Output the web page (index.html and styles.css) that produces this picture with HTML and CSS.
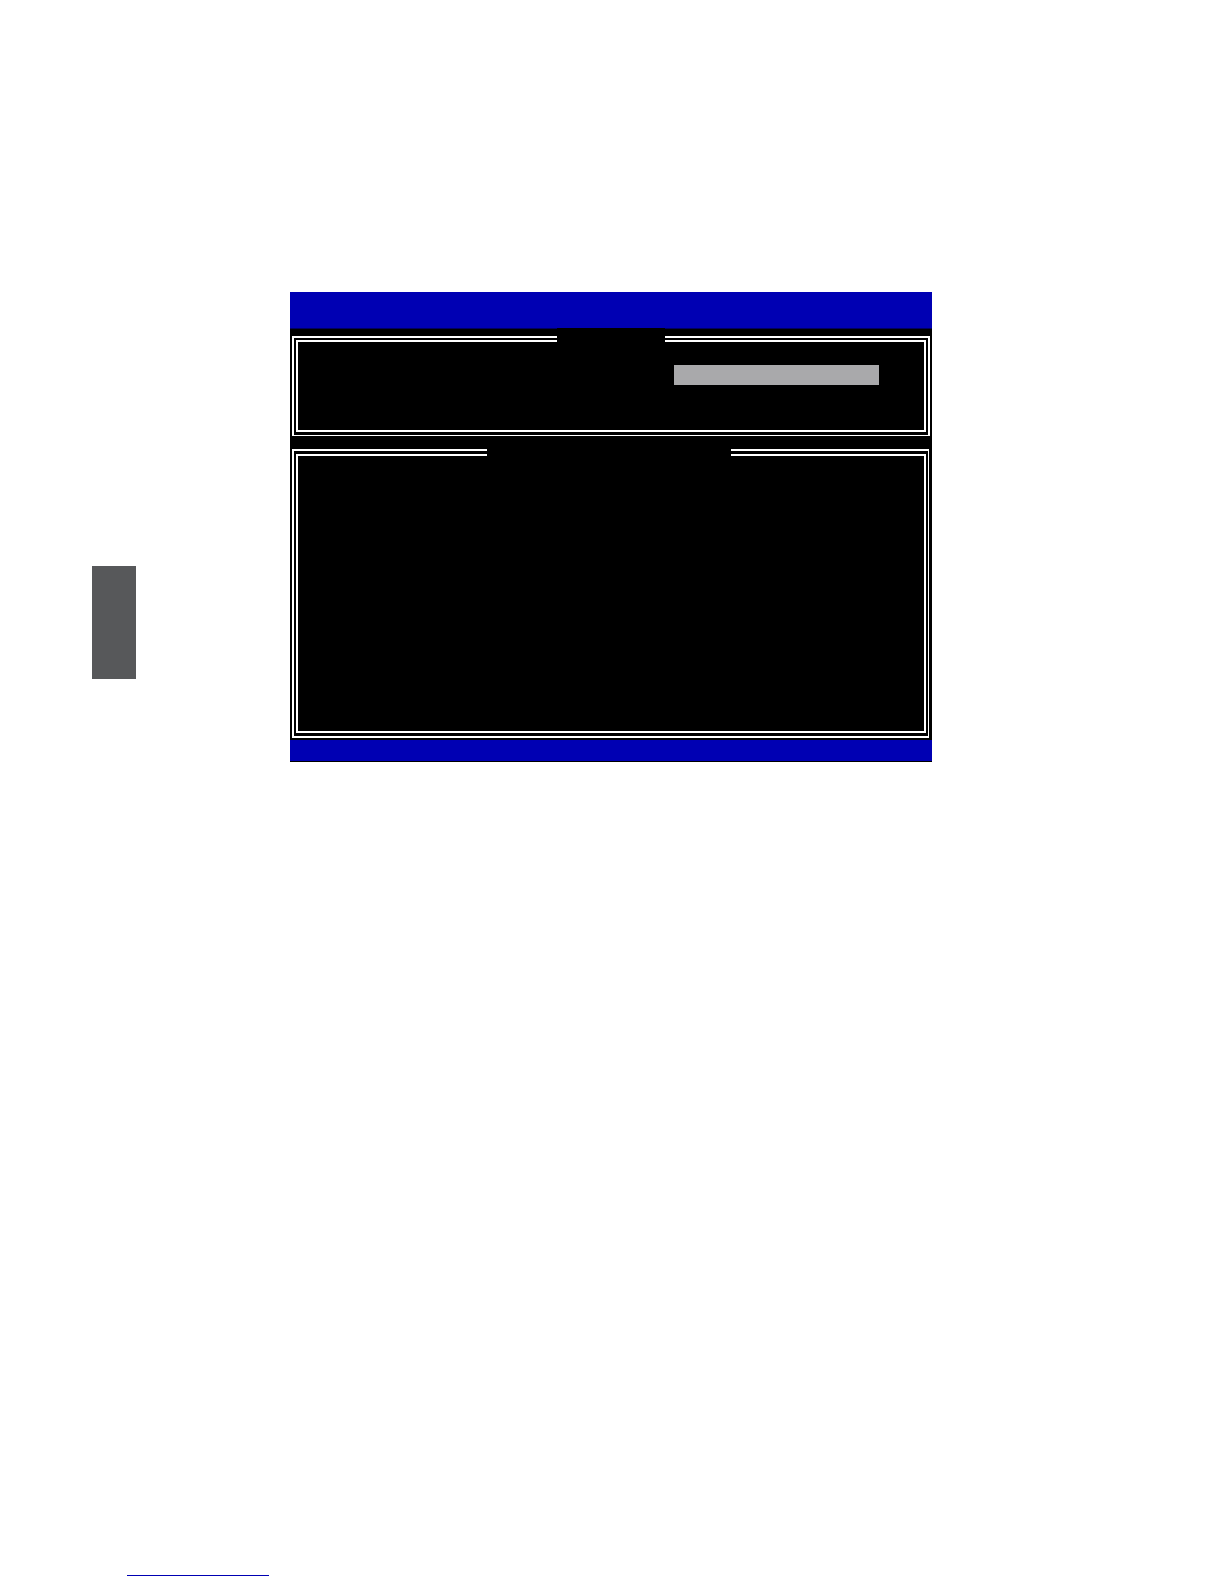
FILE: index.html
```html
<!DOCTYPE html>
<html lang="en">
<head>
<meta charset="UTF-8">
<meta name="viewport" content="width=device-width, initial-scale=1.0">
<link rel="stylesheet" href="styles.css">
</head>
<body>

<main class="content">
    <div class="chapter-tab"></div>
    <div class="screen">
        <div class="screen-header"></div>
        <div class="panel panel-menu">
            <div class="panel-title"></div>
            <div class="panel-inner">
                <div class="selected"></div>
            </div>
        </div>
        <div class="panel panel-info">
            <div class="panel-title"></div>
            <div class="panel-inner"></div>
        </div>
        <div class="screen-footer"></div>
    </div>
</main>

<footer class="page-footer">
    <div class="underline"></div>
</footer>

</body>
</html>
```

FILE: styles.css
```css
* { box-sizing:border-box; }
body { font-family:"Liberation Sans",sans-serif; background:white; margin:0; min-height:100vh; display:flex; flex-direction:column; justify-content:space-between; }

.content { display:flex; align-items:flex-start; padding:292px 292px 0 92px; }
.chapter-tab { flex:none; width:44px; height:113px; margin-top:274px; background:#57585a; }

/* BIOS screen */
.screen { flex:1; margin-left:154px; background:black; border-bottom:1px solid black; }
.screen-header { height:37px; background:#0000b3; border-bottom:1px solid #000060; }
.screen-footer { height:21px; background:#0000b3; }

/* Double line frames */
.panel { position:relative; margin:0 2px; border:2px solid white; padding:2px; }
.panel-inner { height:100%; border:2px solid white; }
.panel-menu { height:100px; margin-top:7px; border-bottom-width:1px; padding-bottom:3px; }
.panel-info { height:289px; margin:13px 3px 2px 2px; border-right-width:1px; padding-top:3px; padding-bottom:3px; }

/* Break in the top lines of a frame */
.panel-title { position:absolute; top:-10px; height:18px; background:black; }
.panel-menu .panel-title { left:263px; width:108px; }
.panel-info .panel-title { left:193px; width:244px; }

.selected { width:205px; height:20px; margin:23px 45px 0 auto; background:#a9a9ab; }

.page-footer { padding:0 127px 8px; }
.underline { width:142px; height:1px; background:#0000b3; }
```
